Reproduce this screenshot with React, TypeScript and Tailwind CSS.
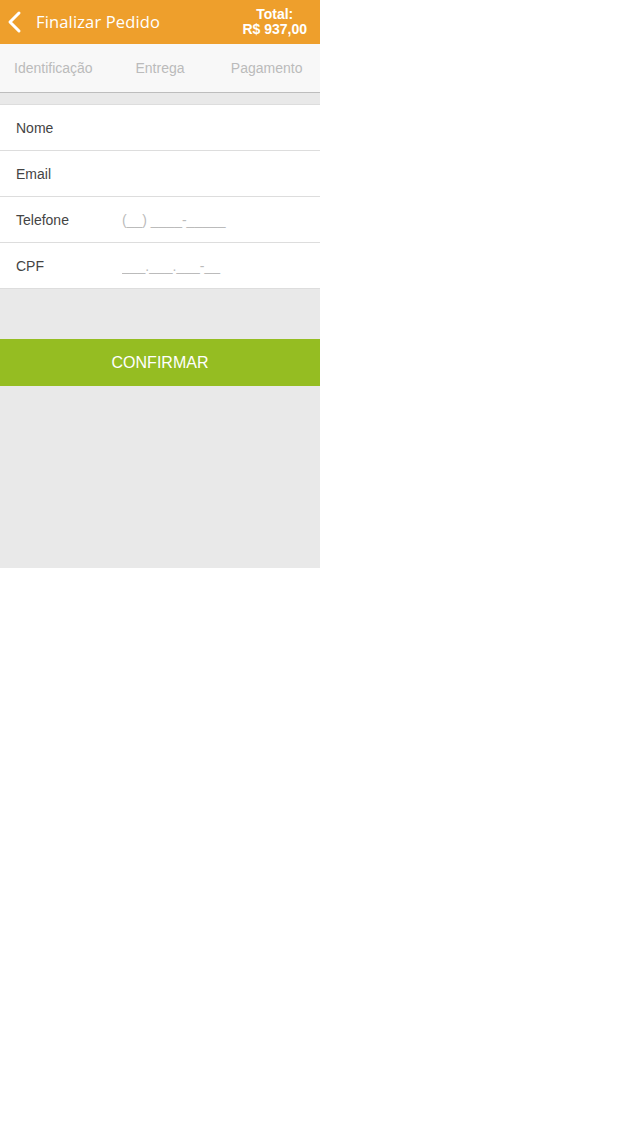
const fields = [
  { label: "Nome", placeholder: "" },
  { label: "Email", placeholder: "" },
  { label: "Telefone", placeholder: "(__) ____-_____" },
  { label: "CPF", placeholder: "___.___.___-__" },
];

export default function App() {
  return (
    <div className="w-[320px] h-[568px] bg-[#e9e9e9] flex flex-col font-['Liberation_Sans',Arial,sans-serif]">
      <header className="h-[44px] bg-[#ee9f2c] flex items-center text-white">
        <svg width="20" height="24" viewBox="0 0 20 24" className="ml-[4px]">
          <path d="M15 3 L6 12 L15 21" fill="none" stroke="white" strokeWidth="3" strokeLinecap="round" strokeLinejoin="round" />
        </svg>
        <h1 className="ml-[12px] flex-1 text-[16.5px] font-['Open_Sans',sans-serif] tracking-[0.15px]">
          Finalizar Pedido
        </h1>
        <div className="pr-[13px] text-center font-bold text-[14px] leading-[15px]">
          <div>Total:</div>
          <div>R$ 937,00</div>
        </div>
      </header>

      <nav className="h-[49px] bg-[#f8f8f8] border-b-[1.5px] border-[#bdbdbd] grid grid-cols-3 items-center text-center text-[14px] text-[#bbbbbb]">
        <span>Identificação</span>
        <span>Entrega</span>
        <span>Pagamento</span>
      </nav>

      <form className="mt-[11px] bg-white border-t border-[#dddddd]">
        {fields.map((f) => (
          <label
            key={f.label}
            className="h-[46px] flex items-center border-b border-[#dddddd] px-[16px]"
          >
            <span className="w-[106px] mt-[1px] text-[14px] text-[#444444]">{f.label}</span>
            <input
              type="text"
              placeholder={f.placeholder}
              className="flex-1 min-w-0 mt-[2px] text-[14px] text-[#444444] placeholder:text-[#bbbbbb] outline-none bg-transparent"
            />
          </label>
        ))}
      </form>

      <button className="mt-[50px] h-[47px] bg-[#95bd22] text-white text-[16px]">
        CONFIRMAR
      </button>
    </div>
  );
}
